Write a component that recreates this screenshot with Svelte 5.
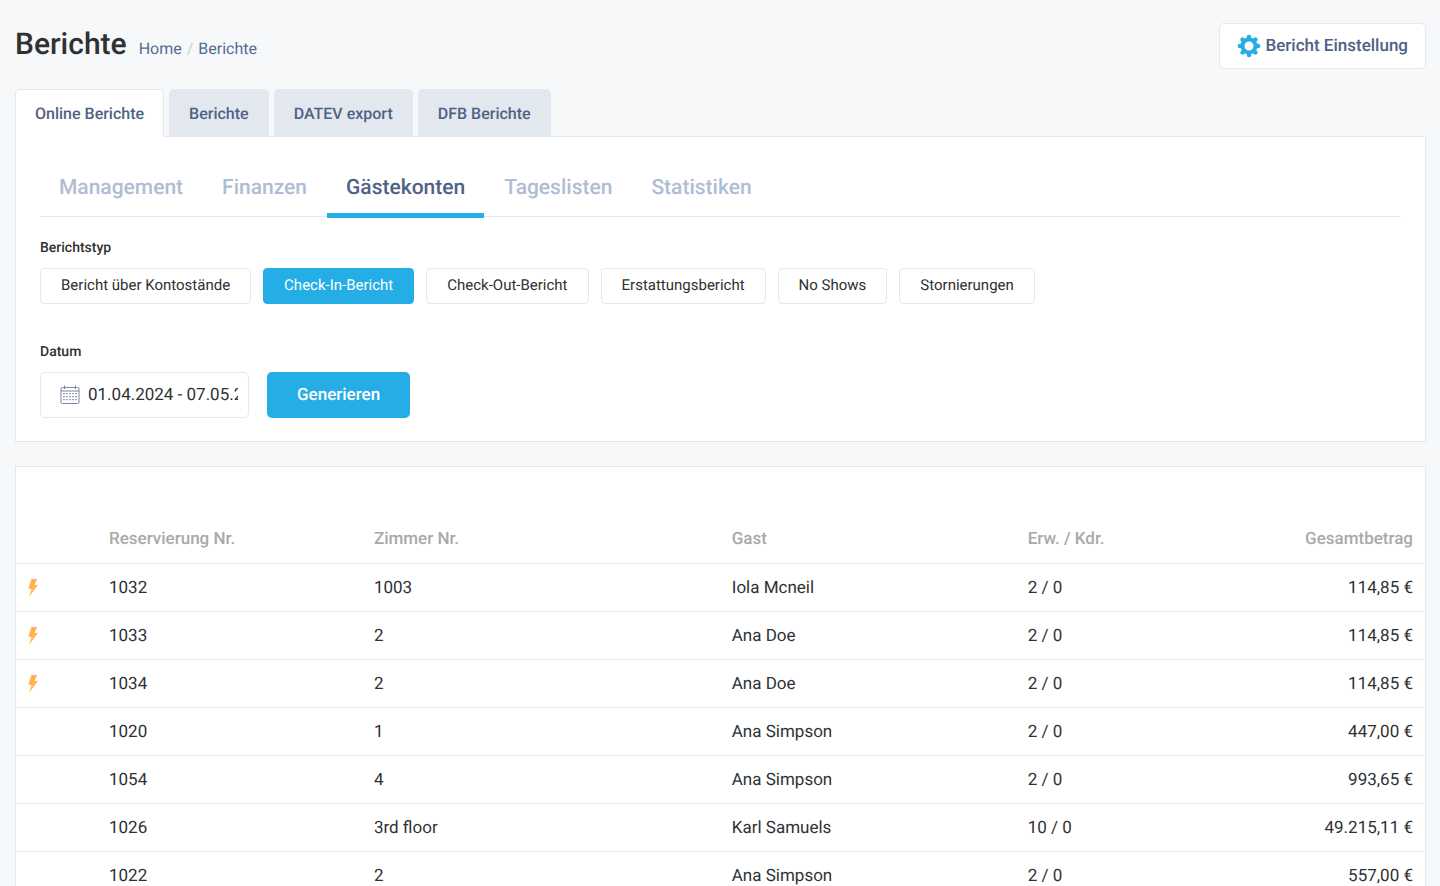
<script>
  const tabs = ['Online Berichte', 'Berichte', 'DATEV export', 'DFB Berichte'];
  const groups = ['Management', 'Finanzen', 'Gästekonten', 'Tageslisten', 'Statistiken'];
  const types = [
    'Bericht über Kontostände',
    'Check-In-Bericht',
    'Check-Out-Bericht',
    'Erstattungsbericht',
    'No Shows',
    'Stornierungen',
  ];

  const rows = [
    { id: '1032', room: '1003', guest: 'Iola Mcneil', pax: '2 / 0', total: '114,85 €', flash: true },
    { id: '1033', room: '2', guest: 'Ana Doe', pax: '2 / 0', total: '114,85 €', flash: true },
    { id: '1034', room: '2', guest: 'Ana Doe', pax: '2 / 0', total: '114,85 €', flash: true },
    { id: '1020', room: '1', guest: 'Ana Simpson', pax: '2 / 0', total: '447,00 €' },
    { id: '1054', room: '4', guest: 'Ana Simpson', pax: '2 / 0', total: '993,65 €' },
    { id: '1026', room: '3rd floor', guest: 'Karl Samuels', pax: '10 / 0', total: '49.215,11 €' },
    { id: '1022', room: '2', guest: 'Ana Simpson', pax: '2 / 0', total: '557,00 €' },
  ];

  const teeth = [0, 45, 90, 135, 180, 225, 270, 315];
  const dotRows = [8, 11, 14];
  const dotCols = [4, 7, 10, 13, 16];

  let tab = $state('Online Berichte');
  let group = $state('Gästekonten');
  let type = $state('Check-In-Bericht');
  let range = $state('01.04.2024 - 07.05.2024');
</script>

<div class="page">
  <header class="top">
    <div class="title">
      <h1>Berichte</h1>
      <nav class="crumbs" aria-label="Breadcrumb">
        <a href="#home">Home</a>
        <span class="sep">/</span>
        <a href="#berichte">Berichte</a>
      </nav>
    </div>
    <button class="settings" type="button">
      <svg width="24" height="24" viewBox="0 0 24 24" aria-hidden="true">
        {#each teeth as angle}
          <path d="M9.600 6 10 2Q10.200 .7 12 .7T14 2L14.400 6Z" fill="#25ade6" transform="rotate({angle} 12 12)" />
        {/each}
        <circle cx="12" cy="12" r="6.500" fill="none" stroke="#25ade6" stroke-width="4" />
      </svg>
      Bericht Einstellung
    </button>
  </header>

  <div class="tabs" role="tablist">
    {#each tabs as name}
      <button
        type="button"
        role="tab"
        class="tab"
        class:active={tab === name}
        aria-selected={tab === name}
        onclick={() => (tab = name)}
      >{name}</button>
    {/each}
  </div>

  <section class="panel filters">
    <div class="groups" role="tablist">
      {#each groups as name}
        <button
          type="button"
          role="tab"
          class="group"
          class:active={group === name}
          aria-selected={group === name}
          onclick={() => (group = name)}
        >{name}</button>
      {/each}
    </div>

    <div class="label" id="type-label">Berichtstyp</div>
    <div class="types" role="group" aria-labelledby="type-label">
      {#each types as name}
        <button
          type="button"
          class="type"
          class:active={type === name}
          aria-pressed={type === name}
          onclick={() => (type = name)}
        >{name}</button>
      {/each}
    </div>

    <label class="label" for="range">Datum</label>
    <div class="date-row">
      <div class="date">
        <svg width="20" height="20" viewBox="0 0 20 20" aria-hidden="true">
          <rect x="1" y="2.5" width="18" height="16" rx="1.5" fill="none" stroke="#7588a6" />
          <path d="M1 6h18M4.500 .5v3.500M15.500 .5v3.500" fill="none" stroke="#7588a6" />
          {#each dotRows as y}
            {#each dotCols as x}
              <rect x={x - 0.6} y={y} width="1.200" height="1.200" fill="#4f6285" />
            {/each}
          {/each}
        </svg>
        <input id="range" type="text" bind:value={range} />
      </div>
      <button class="generate" type="button">Generieren</button>
    </div>
  </section>

  <section class="panel results">
    <table>
      <colgroup>
        <col class="c-flag" />
        <col class="c-id" />
        <col class="c-room" />
        <col class="c-guest" />
        <col class="c-pax" />
      </colgroup>
      <thead>
        <tr>
          <th></th>
          <th>Reservierung Nr.</th>
          <th>Zimmer Nr.</th>
          <th>Gast</th>
          <th>Erw. / Kdr.</th>
          <th class="num">Gesamtbetrag</th>
        </tr>
      </thead>
      <tbody>
        {#each rows as row}
          <tr>
            <td>
              {#if row.flash}
                <svg class="bolt" width="10" height="18" viewBox="0 0 10 18" aria-hidden="true">
                  <path d="M3.500 0H9.300L6.400 5.800 9.800 6.100 1.100 17.800 3.600 10 .2 9.700Z" fill="#fdb44b" />
                </svg>
              {/if}
            </td>
            <td>{row.id}</td>
            <td>{row.room}</td>
            <td>{row.guest}</td>
            <td>{row.pax}</td>
            <td class="num">{row.total}</td>
          </tr>
        {/each}
      </tbody>
    </table>
  </section>
</div>

<style>
  :global(body) {
    background: #f6f8fa;
    color: #303133;
    font: 400 17px/24px Roboto, "Liberation Sans", sans-serif;
    text-rendering: geometricPrecision;
    overflow: hidden;
  }

  button, input { font: inherit; color: inherit; text-rendering: inherit; }
  button { cursor: pointer; }

  .page { padding: 23px 14px 0 15px; }

  .top {
    display: flex;
    justify-content: space-between;
    align-items: center;
    margin-bottom: 20px;
  }
  .title { display: flex; align-items: baseline; gap: 12px; padding-bottom: 2px; }
  h1 { margin: 0; font-size: 30px; line-height: 40px; font-weight: 500; }
  .crumbs { display: flex; gap: 5px; font-size: 16px; }
  .crumbs a { color: #556b92; text-decoration: none; }
  .sep { color: #c9cdd4; }

  .settings {
    display: flex;
    align-items: center;
    gap: 4px;
    height: 46px;
    padding: 0 17px;
    background: #fff;
    border: 1px solid #e4e8f0;
    border-radius: 5px;
    color: #4f6285;
    font-weight: 500;
  }

  .tabs { display: flex; gap: 5px; }
  .tab {
    height: 47px;
    padding: 1px 19px 0;
    background: #e3e8ef;
    border: 1px solid #e3e8ef;
    border-bottom: 0;
    border-radius: 5px 5px 0 0;
    color: #4f6285;
    font-size: 16px;
    font-weight: 500;
  }
  .tab.active {
    position: relative;
    height: 48px;
    margin-bottom: -1px;
    padding-bottom: 1px;
    background: #fff;
  }

  .panel { background: #fff; border: 1px solid #e4e8f0; }
  .filters { padding: 24px 24px 23px; margin-bottom: 24px; }

  .groups {
    display: flex;
    gap: 1px;
    margin-bottom: 19px;
    border-bottom: 1px solid #e4e8f0;
  }
  .group {
    height: 57px;
    margin-bottom: -2px;
    padding: 2px 19px 0;
    background: none;
    border: 0;
    border-bottom: 5px solid transparent;
    color: #afbdd4;
    font-size: 21px;
    font-weight: 500;
  }
  .group.active { color: #4f6285; border-bottom-color: #25ade6; }

  .label {
    display: block;
    margin-bottom: 8px;
    font-size: 14px;
    font-weight: 500;
  }

  .types { display: flex; flex-wrap: wrap; gap: 12px; margin-bottom: 36px; }
  .type {
    height: 36px;
    padding: 0 20px 3px;
    background: #fff;
    border: 1px solid #e4e8f0;
    border-radius: 4px;
    font-size: 15px;
  }
  .type.active { background: #25ade6; border-color: #25ade6; color: #fff; }

  .date-row { display: flex; gap: 18px; }
  .date {
    display: flex;
    align-items: center;
    gap: 8px;
    box-sizing: border-box;
    width: 209px;
    height: 46px;
    padding: 0 10px 0 19px;
    border: 1px solid #e4e8f0;
    border-radius: 5px;
  }
  .date svg { flex: none; }
  .date input {
    min-width: 0;
    flex: 1;
    padding: 0;
    border: 0;
    outline: 0;
    background: none;
  }
  .generate {
    height: 46px;
    padding: 0 30px;
    background: #25ade6;
    border: 0;
    border-radius: 5px;
    color: #fff;
    font-weight: 500;
  }

  .results { padding-top: 48px; }
  table {
    width: 100%;
    table-layout: fixed;
    border-spacing: 0;
  }
  .c-flag { width: 81px; }
  .c-id { width: 18.8%; }
  .c-room { width: 25.4%; }
  .c-guest { width: 21%; }
  .c-pax { width: 14%; }
  th, td {
    height: 48px;
    box-sizing: border-box;
    padding: 0 12px;
    border-bottom: 1px solid #ebedf0;
    text-align: left;
  }
  th { height: 49px; color: #a9a9a9; font-weight: 500; }
  .num { text-align: right; }
  .bolt { display: block; }
</style>
